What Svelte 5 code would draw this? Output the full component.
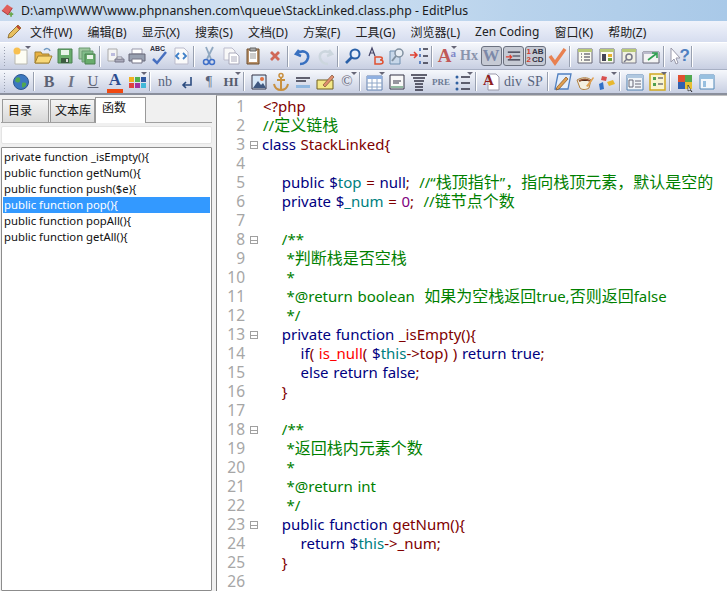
<script>
  const fnList = [
    'private function _isEmpty(){',
    'public function getNum(){',
    'public function push($e){',
    'public function pop(){',
    'public function popAll(){',
    'public function getAll(){'
  ];
  const menus = ['文件(W)','编辑(B)','显示(X)','搜索(S)','文档(D)','方案(F)','工具(G)','浏览器(L)','Zen Coding','窗口(K)','帮助(Z)'];
  const k='k', i='i', o='o', c='c', t='t', n='n', r='r', v='v';
  const lines = [
    {s:[[i,'<?php']]},
    {s:[[c,'//定义链栈']]},
    {f:1,x:1,s:[[k,'class '],[i,'StackLinked{']]},
    {s:[]},
    {s:[[k,'    public '],[v,'$'],[t,'top'],[o,' = '],[k,'null'],[o,';  '],[c,'//“栈顶指针”，指向栈顶元素，默认是空的']]},
    {s:[[k,'    private '],[v,'$'],[t,'_num'],[o,' = '],[n,'0'],[o,';  '],[c,'//链节点个数']]},
    {s:[]},
    {f:1,s:[[c,'    /**']]},
    {s:[[c,'     *判断栈是否空栈']]},
    {s:[[c,'     *']]},
    {s:[[c,'     *@return boolean  如果为空栈返回true,否则返回false']]},
    {s:[[c,'     */']]},
    {f:1,s:[[k,'    private function '],[i,'_isEmpty(){']]},
    {s:[[k,'        if'],[i,'( '],[r,'is_null'],[i,'( '],[v,'$'],[t,'this'],[i,'->top) ) '],[k,'return true'],[i,';']]},
    {s:[[k,'        else return false'],[i,';']]},
    {s:[[i,'    }']]},
    {s:[]},
    {f:1,s:[[c,'    /**']]},
    {s:[[c,'     *返回栈内元素个数']]},
    {s:[[c,'     *']]},
    {s:[[c,'     *@return int']]},
    {s:[[c,'     */']]},
    {f:1,s:[[k,'    public function '],[i,'getNum(){']]},
    {s:[[k,'        return '],[v,'$'],[t,'this'],[i,'->_num;']]},
    {s:[[i,'    }']]},
    {s:[]}
  ];
  const parts = (text) => text.split(/([\u3000-\u9fff\uff00-\uffef]+)/).filter(Boolean);
  const isCjk = (p) => /[\u3000-\u9fff\uff00-\uffef]/.test(p);
</script>

<div class="win">
  <div class="title">
    <svg class="appicon" viewBox="0 0 16 16"><path d="M1 8 7 1l6 4-5 8z" fill="#e0605c"/><path d="M1 8l7 5 5-8" fill="none" stroke="#a83030"/><path d="M9 12h5M11.500 10v5" stroke="#6aa84f" stroke-width="2"/></svg>
    <span>D:\amp\WWW\www.phpnanshen.com\queue\StackLinked.class.php - EditPlus</span>
  </div>

  <div class="menu">
    <svg class="pencil" viewBox="0 0 16 16"><path d="M2 14 3 10 12 1l3 3-9 9z" fill="#e8c060" stroke="#806020" stroke-width=".8"/><path d="M11 2l3 3" stroke="#c04030" stroke-width="2"/></svg>
    {#each menus as m}<span>{m}</span>{/each}
  </div>

  <div class="bar one">
    <i class="grip"></i>
    <b class="btn dd"><svg viewBox="0 0 22 22"><path d="M5 5h12v14H5z" fill="#fdfdf4" stroke="#b8b8b0"/><circle cx="7" cy="6" r="3.500" fill="#f8c050"/></svg></b>
    <b class="btn"><svg viewBox="0 0 22 22"><path d="M3 7h6l1 2h7v9H3z" fill="#e8b040" stroke="#a08030"/><path d="M3 18l3-7h14l-3 7z" fill="#f8d878" stroke="#a08030"/><path d="M12 5c2-2 5-2 6 1" fill="none" stroke="#7098c0" stroke-width="1.500"/></svg></b>
    <b class="btn"><svg viewBox="0 0 22 22"><path d="M4 4h14v14H4z" fill="#68ac6c" stroke="#4a8050"/><path d="M7 5h8v5H7z" fill="#e8f4e8"/><path d="M7 13h8v5H7z" fill="#3c5c40"/><path d="M12 14h2v3h-2z" fill="#ddd"/></svg></b>
    <b class="btn"><svg viewBox="0 0 22 22"><path d="M3 3h11v11H3z" fill="#a0c8a0" stroke="#6a9a70"/><path d="M6 6h11v11H6z" fill="#80bc88" stroke="#6a9a70"/><path d="M9 9h10v10H9z" fill="#68ac6c" stroke="#4a8050"/><path d="M11 10h6v4h-6z" fill="#e8f4e8"/></svg></b>
    <i class="sep"></i>
    <b class="btn"><svg viewBox="0 0 22 22"><path d="M4 4h9v12H4z" fill="#f4f4f4" stroke="#aaa"/><path d="M7 8h4v3H7z" fill="#bbd"/><path d="M11 14h9v3h-9z" fill="#aab" stroke="#778"/><path d="M13 12h5v2h-5z" fill="#fff" stroke="#889"/></svg></b>
    <b class="btn"><svg viewBox="0 0 22 22"><path d="M6 4h10v5H6z" fill="#fff" stroke="#99a"/><path d="M3 9h16v7H3z" fill="#98a0b0" stroke="#667"/><path d="M6 14h10v4H6z" fill="#fff" stroke="#778"/></svg></b>
    <b class="btn"><svg viewBox="0 0 22 22"><path d="M5 14l4 4 9-11" fill="none" stroke="#4870c0" stroke-width="2.500"/></svg><em class="abc">ABC</em></b>
    <b class="btn"><svg viewBox="0 0 22 22"><path d="M5 3h9l4 4v12H5z" fill="#fafafa" stroke="#bbc"/><path d="M9 8 6 11l3 3M13 8l3 3-3 3" fill="none" stroke="#4080c8" stroke-width="1.800"/></svg></b>
    <i class="sep"></i>
    <b class="btn"><svg viewBox="0 0 22 22"><path d="M8 2l5 12M15 2l-6 12" stroke="#90a8c0" stroke-width="1.800"/><circle cx="8" cy="17" r="2.500" fill="none" stroke="#4070c8" stroke-width="1.500"/><circle cx="14" cy="17" r="2.500" fill="none" stroke="#4070c8" stroke-width="1.500"/></svg></b>
    <b class="btn"><svg viewBox="0 0 22 22"><path d="M4 3h8l3 3v9H4z" fill="#f8f8f8" stroke="#bbc"/><path d="M9 8h7l3 3v8H9z" fill="#fff" stroke="#aab"/><path d="M11 12h6M11 14h6M11 16h6" stroke="#aab"/></svg></b>
    <b class="btn"><svg viewBox="0 0 22 22"><path d="M5 4h12v15H5z" fill="#b89068" stroke="#705030"/><path d="M7 6h8v11H7z" fill="#fff"/><path d="M8 3h6v3H8z" fill="#aaa" stroke="#666"/><path d="M8 9h6M8 11h6M8 13h6" stroke="#999"/></svg></b>
    <b class="btn"><svg viewBox="0 0 22 22"><path d="M7 7l8 8M15 7l-8 8" stroke="#d06858" stroke-width="2.800"/></svg></b>
    <i class="sep"></i>
    <b class="btn"><svg viewBox="0 0 22 22"><path d="M7 5 4 9l5 2M4 9c7-5 13-2 12 4-1 4-4 6-8 6" fill="none" stroke="#3870c0" stroke-width="2.600"/></svg></b>
    <b class="btn"><svg viewBox="0 0 22 22"><path d="M15 5l3 4-5 2M18 9c-7-5-13-2-12 4 1 4 4 6 8 6" fill="none" stroke="#ccd6de" stroke-width="2.600"/></svg></b>
    <i class="sep"></i>
    <b class="btn"><svg viewBox="0 0 22 22"><circle cx="13" cy="9" r="4.500" fill="#e8f0fa" stroke="#2860a8" stroke-width="2"/><path d="M10 12l-6 6" stroke="#2860a8" stroke-width="2.600"/></svg></b>
    <b class="btn"><svg viewBox="0 0 22 22"><path d="M5 11 8 3l3 8M6 8h4" fill="none" stroke="#446" stroke-width="1.200"/><path d="M11 12h5c3 0 3 3 0 3 4 0 4 4 0 4h-5z" fill="none" stroke="#e05030" stroke-width="1.500"/></svg></b>
    <b class="btn"><svg viewBox="0 0 22 22"><path d="M4 6h10v13H4z" fill="#c8d8ea" stroke="#7090b0"/><circle cx="13" cy="8" r="4" fill="#e8eef4" stroke="#8090a0" stroke-width="1.500"/><path d="M10 11l-4 5" stroke="#8090a0" stroke-width="2"/></svg></b>
    <b class="btn"><svg viewBox="0 0 22 22"><path d="M2 10h7M6 7l3 3-3 3" fill="none" stroke="#e04030" stroke-width="1.500"/><path d="M15 4h5M15 11h5M15 18h5" stroke="#334" stroke-width="1.400"/><path d="M12 3v3M12 9v3M12 16v3" stroke="#3060b0" stroke-width="1.400"/></svg></b>
    <i class="sep"></i>
    <b class="btn dd serif"><em class="big">A</em><em class="sup">a</em></b>
    <b class="btn serif"><em class="hx">Hx</em></b>
    <b class="btn on"><em class="w">W</em></b>
    <b class="btn on"><svg viewBox="0 0 20 18"><path d="M4 5h13M9 9h8M4 13h13" stroke="#334" stroke-width="1.300"/><path d="M2 10h6M6 8l2 2-2 2" fill="none" stroke="#e04030" stroke-width="1.300"/></svg></b>
    <b class="btn on num"><em class="n1">1<br>2</em><em class="n2">AB<br>CD</em></b>
    <b class="btn"><svg viewBox="0 0 22 22"><path d="M4 11l5 7L19 4" fill="none" stroke="#e88050" stroke-width="3.400"/></svg></b>
    <i class="sep"></i>
    <b class="btn"><svg viewBox="0 0 22 22"><path d="M4 4h14v14H4z" fill="#fafaf0" stroke="#667"/><path d="M4 4h14v3H4z" fill="#b8c878"/><path d="M7 9h1M7 12h1M7 15h1M10 9h6M10 12h6M10 15h6" stroke="#334"/></svg></b>
    <b class="btn"><svg viewBox="0 0 22 22"><path d="M4 4h14v14H4z" fill="#fafaf0" stroke="#667"/><path d="M4 4h14v3H4z" fill="#b8c878"/><path d="M6 9h4v7H6z" fill="#445"/><path d="M12 9h4v3h-4z" fill="#e8b030"/><path d="M12 13h4v3h-4z" fill="#70a040"/></svg></b>
    <b class="btn"><svg viewBox="0 0 22 22"><path d="M4 4h14v14H4z" fill="#f0f0e4" stroke="#778"/><path d="M4 4h14v3H4z" fill="#b8c878"/><circle cx="11" cy="12" r="3" fill="none" stroke="#778" stroke-width="1.500"/><path d="M9 14l-3 3" stroke="#778" stroke-width="1.500"/></svg></b>
    <b class="btn"><svg viewBox="0 0 22 22"><path d="M3 7h16v11H3z" fill="#f4f4f4" stroke="#667"/><path d="M3 7h16v2H3z" fill="#bbc"/><path d="M8 15l8-6M12 8h5v5" fill="none" stroke="#30a050" stroke-width="1.600"/></svg></b>
    <i class="sep"></i>
    <b class="btn"><svg viewBox="0 0 22 22"><path d="M3 3v14l3-3 2 5 2-1-2-5h4z" fill="#fff" stroke="#99a"/></svg><em class="help">?</em></b>
    <i class="sep"></i>
  </div>

  <div class="bar two">
    <i class="grip"></i>
    <b class="btn"><svg viewBox="0 0 22 22"><circle cx="11" cy="11" r="7.500" fill="#3c78c0" stroke="#2c5890"/><path d="M6 7c3-2 5 0 4 3s-4 1-5 0zM12 12c3-1 5 0 4 2s-3 3-4 2z" fill="#50a850"/></svg></b>
    <i class="sep"></i>
    <b class="btn txt bb">B</b>
    <b class="btn txt ii">I</b>
    <b class="btn txt uu">U</b>
    <b class="btn txt aa">A</b>
    <b class="btn dd"><svg viewBox="0 0 22 22"><path d="M3 6h5v5H3z" fill="#f0b020"/><path d="M9 6h5v5H9z" fill="#50b050"/><path d="M15 6h5v5h-5z" fill="#3058a0"/><path d="M3 12h5v5H3z" fill="#e04040"/><path d="M9 12h5v5H9z" fill="#a030a0"/><path d="M15 12h5v5h-5z" fill="#40b8d8"/></svg></b>
    <i class="sep"></i>
    <b class="btn txt sm">nb</b>
    <b class="btn"><svg viewBox="0 0 22 22"><path d="M15 6v8H7M10 11l-3 3 3 3" fill="none" stroke="#2c4c80" stroke-width="1.600"/></svg></b>
    <b class="btn txt sm">¶</b>
    <b class="btn dd txt sm hb">HI</b>
    <i class="sep"></i>
    <b class="btn"><svg viewBox="0 0 22 22"><path d="M4 4h14v14H4z" fill="#d8e8f8" stroke="#334"/><path d="M5 17l5-7 3 4 2-2 3 5z" fill="#405880"/><circle cx="14" cy="8" r="2" fill="#e07040"/></svg></b>
    <b class="btn"><svg viewBox="0 0 22 22"><circle cx="11" cy="4.500" r="2" fill="none" stroke="#c89040" stroke-width="1.500"/><path d="M11 6v13M7 9h8M4 13c1 5 4 6 7 6s6-1 7-6" fill="none" stroke="#c89040" stroke-width="2"/></svg></b>
    <b class="btn"><svg viewBox="0 0 22 22"><path d="M4 7h14M4 10h10" stroke="#334" stroke-width="1.400"/><path d="M4 14h14v3H4z" fill="#90b8e0"/></svg></b>
    <b class="btn"><svg viewBox="0 0 22 22"><path d="M3 9h16v9H3z" fill="#f4e888" stroke="#706020"/><path d="M9 14 18 4l2 2-9 10z" fill="#e09070" stroke="#805030" stroke-width=".7"/></svg></b>
    <b class="btn dd txt cc">©</b>
    <i class="sep"></i>
    <b class="btn dd"><svg viewBox="0 0 22 22"><path d="M3 5h15v14H3z" fill="#fff" stroke="#6080b0"/><path d="M3 5h15v3H3z" fill="#90b0e0"/><path d="M8 8v11M13 8v11M3 12h15M3 16h15" stroke="#90a8c8"/></svg></b>
    <b class="btn"><svg viewBox="0 0 22 22"><path d="M4 4h14v14H4z" fill="#f8f8f8" stroke="#334"/><path d="M7 10h8M7 12h6" stroke="#334"/><path d="M5 15h12v2H5z" fill="#90b8a0"/></svg></b>
    <b class="btn"><svg viewBox="0 0 22 22"><path d="M3 4h16M5 7h12M6 10h10M7 13h8M7 16h8M7 19h8" stroke="#334" stroke-width="1.300"/></svg></b>
    <b class="btn txt pre">PRE</b>
    <b class="btn dd"><svg viewBox="0 0 22 22"><circle cx="5" cy="6" r="1.500" fill="#3060a0"/><circle cx="5" cy="12" r="1.500" fill="#3060a0"/><circle cx="5" cy="18" r="1.500" fill="#3060a0"/><path d="M9 6h9M9 12h9M9 18h9" stroke="#334" stroke-width="1.300"/></svg></b>
    <i class="sep"></i>
    <b class="btn"><svg viewBox="0 0 22 22"><path d="M8 3h8l3 3v13H8z" fill="#fff" stroke="#99a"/></svg><em class="reda">A</em></b>
    <b class="btn txt sm">div</b>
    <b class="btn txt sm">SP</b>
    <i class="sep"></i>
    <b class="btn"><svg viewBox="0 0 22 22"><path d="M6 3h13l-3 15H3z" fill="#e4eefa" stroke="#5080c0" stroke-width="1.300"/><path d="M4 19l3-1 9-10-2-2-9 10z" fill="#e0a050" stroke="#805020" stroke-width=".7"/></svg></b>
    <b class="btn"><svg viewBox="0 0 22 22"><path d="M3 9c5-3 11-3 14 0l-2 8c-3 2-7 2-9 0z" fill="#f4f0e0" stroke="#b08040"/><path d="M5 10c4-2 8-2 11 0" stroke="#905030" stroke-width="2"/><path d="M12 15 19 6l1 1-6 9z" fill="#e0a050"/></svg></b>
    <b class="btn dd"><svg viewBox="0 0 22 22"><path d="M6 5l5 1-1 4-5-1z" fill="#d85050"/><path d="M3 13l4-2 1 7-4 1z" fill="#3070c8"/><path d="M11 11l6-2 2 4-6 2z" fill="#e8b830"/></svg></b>
    <i class="sep"></i>
    <b class="btn"><svg viewBox="0 0 22 22"><path d="M3 4h16v15H3z" fill="#f0f4f8" stroke="#5080b0"/><path d="M3 4h16v3H3z" fill="#b0c8e0"/><path d="M5 9h4v7H5z" fill="none" stroke="#667"/><path d="M11 10h6M11 13h6M11 16h6" stroke="#667"/></svg></b>
    <b class="btn dd"><svg viewBox="0 0 22 22"><path d="M4 3h15v16H4z" fill="#f8f4d0" stroke="#d0a820" stroke-width="1.500"/><path d="M7 6h3v3H7z" fill="#50a050"/><path d="M7 12h3v3H7z" fill="#50a050"/><path d="M12 7h5M12 13h5" stroke="#334"/></svg></b>
    <i class="sep"></i>
    <b class="btn"><svg viewBox="0 0 22 22"><path d="M4 4h7v7H4z" fill="#e05030"/><path d="M11 4h7v7h-7z" fill="#50a850"/><path d="M4 11h7v7H4z" fill="#3060b0"/><path d="M11 11h7v7h-7z" fill="#e8c030"/><path d="M14 14v6l2-1 2 2z" fill="#fff" stroke="#111" stroke-width=".6"/></svg></b>
    <b class="btn"><svg viewBox="0 0 22 22"><path d="M4 4h14v14H4z" fill="#f4f8fc" stroke="#5088b8"/><path d="M4 4h14v4H4z" fill="#98c0e0"/><path d="M7 10h3v6H7z" fill="#98c0e0"/></svg></b>
  </div>

  <div class="main">
    <aside class="left">
      <div class="tabs">
        <span class="tab">目录</span>
        <span class="tab">文本库</span>
        <span class="tab active">函数</span>
      </div>
      <div class="search"></div>
      <ul class="list">
        {#each fnList as f, idx}
          <li class:sel={idx === 3}>{f}</li>
        {/each}
      </ul>
    </aside>
    <section class="editor">
      {#each lines as l, idx}
        <div class="line">
          <span class="no">{idx + 1}</span>
          <span class="fold">{#if l.f}<i class="box"></i>{/if}</span>
          <span class="code" class:tight={l.x}>{#each l.s as s}<span class={s[0]}>{#each parts(s[1]) as p}{#if isCjk(p)}<span class="cjk">{p}</span>{:else}{p}{/if}{/each}</span>{/each}</span>
        </div>
      {/each}
    </section>
  </div>
</div>

<style>
  :global(body) { margin: 0; background: #f0f0f0; }
  .win { width: 727px; height: 591px; overflow: hidden; display: flex; flex-direction: column; font-family: "Noto Sans", "Noto Sans CJK SC", sans-serif; color: #111; }
  .title { height: 21px; display: flex; align-items: center; gap: 6px; padding-left: 1px; font-size: 12.300px; color: #1a1a1a; background: linear-gradient(90deg, #c6d9ee, #d2e2f2 40%, #b9d3ec 70%, #a9c9e8); flex: none; }
  .appicon { width: 14px; height: 15px; flex: none; }
  .menu { height: 21px; flex: none; display: flex; align-items: center; gap: 15.100px; padding-left: 6px; font-size: 12px; background: linear-gradient(#f0f3fb, #d6ddef); border-bottom: 1px solid #fff; color: #222; white-space: nowrap; }
  .pencil { width: 16px; height: 16px; margin-right: -7px; }
  .bar { flex: none; display: flex; align-items: center; padding-left: 3px; background: linear-gradient(#f6f8fc, #c8cfe2); }
  .one { height: 26px; border-bottom: 1px solid #a8b0c4; }
  .two { height: 23px; border-bottom: 2px solid #8a8f9c; }
  .grip { width: 3px; height: 20px; margin-right: 4px; flex: none; background: radial-gradient(circle, #9aa0b0 .8px, transparent 1px) 0 0 / 3px 3px; }
  .sep { width: 1px; height: 21px; background: #98a0b0; margin: 0 3px 0 1px; border-right: 1px solid #fff; flex: none; }
  .two .sep { height: 19px; }
  .btn { width: 22px; height: 22px; flex: none; position: relative; display: flex; align-items: center; justify-content: center; font-weight: 400; }
  .btn svg { width: 22px; height: 22px; display: block; }
  .btn em { font-style: normal; }
  .dd::after { content: ""; position: absolute; top: 1px; right: 1px; border: 3px solid transparent; border-top: 3px solid #667; border-bottom: 0; }
  .abc { position: absolute; top: 0; left: 2px; font: bold 7px "Liberation Sans", sans-serif; color: #334; }
  .serif { font-family: "Liberation Serif", serif; }
  .big { font: bold 19px "Liberation Serif", serif; color: #c05858; margin-right: 5px; }
  .sup { position: absolute; top: 2px; right: 2px; font: bold 11px "Liberation Serif", serif; color: #8088c8; }
  .hx { font: bold 14px "Liberation Serif", serif; color: #8a94ac; }
  .on { width: 21px; margin: -1px .5px 0; height: 20px; border: 1px solid #6c7280; border-radius: 3px; background: #c6cad4; box-sizing: border-box; }
  .on svg { width: 19px; height: 18px; flex: none; }
  .w { font: italic bold 17px "Liberation Serif", serif; color: #7c88a8; }
  .num { gap: 1px; font: bold 8px/8px "Liberation Sans", sans-serif; }
  .n1 { color: #d04030; }
  .n2 { color: #334; }
  .help { position: absolute; right: 0; top: 0; font: bold 17px/22px "Liberation Sans", sans-serif; color: #5080c0; }
  .txt { font-family: "Liberation Serif", serif; font-weight: bold; color: #5c6274; }
  .bb { font-size: 16px; }
  .ii { font-style: italic; font-size: 16px; color: #707484; }
  .uu { font-size: 15px; font-weight: 400; text-decoration: underline; }
  .aa { font-size: 17px; color: #2c4c90; border-bottom: 4px solid #f04810; height: 18px; width: 16px; margin: 0 3px; line-height: 16px; }
  .sm { font-size: 14px; color: #58647e; font-weight: 400; }
  .hb { font-size: 13px; color: #555c6c; font-weight: bold; }
  .cc { font-size: 15px; font-weight: 400; color: #667; }
  .pre { font-size: 9px; color: #6c7a96; }
  .reda { position: absolute; left: 3px; top: 1px; font: bold 15px "Liberation Serif", serif; color: #902020; }

  .main { flex: 1; display: flex; min-height: 0; }
  .left { width: 212px; flex: none; padding: 2px 0 0 1px; box-sizing: border-box; display: flex; flex-direction: column; background: #f0f0f0; }
  .tabs { height: 25px; display: flex; align-items: flex-end; padding-left: 1px; border-bottom: 1px solid #a0a0a0; gap: 1px; flex: none; }
  .tab { height: 23px; width: 47px; box-sizing: border-box; font-size: 12px; line-height: 22px; padding-left: 5px; border: 1px solid #999; border-bottom: 0; background: linear-gradient(#f4f4f4, #d8d8d8); }
  .tab:nth-child(2) { width: 45px; padding-left: 4px; }
  .tab.active { height: 26px; width: 51px; margin: 0 0 -1px -1px; padding-left: 6px; background: #fff; line-height: 20px; }
  .search { height: 18px; margin: 3px 0 3px 0; background: #fff; border: 1px solid #e4e4e4; box-sizing: border-box; border-radius: 2px; flex: none; }
  .list { flex: 1; margin: 0; padding: 1px 1px 0; list-style: none; background: #fff; border: 1px solid #8c8c8c; border-radius: 1px; font-size: 11.300px; }
  .list li { height: 16px; line-height: 16px; padding-left: 1px; color: #111; white-space: nowrap; }
  .list li.sel { background: #3399ff; color: #fff; }

  .editor { flex: 1; min-width: 0; overflow: hidden; background: #fff; margin-left: 4px; border-left: 1px solid #808080; border-top: 1px solid #c0c0c0; padding-top: 1px; font-family: "Noto Sans", "Noto Sans CJK SC", sans-serif; font-size: 15px; word-spacing: .8px; }
  .line { height: 19px; display: flex; align-items: center; white-space: pre; line-height: 19px; }
  .no { width: 28px; text-align: right; color: #a6a6a6; flex: none; font-size: 15.500px; }
  .fold { width: 18px; flex: none; display: flex; justify-content: center; }
  .box { width: 8px; height: 8px; border: 1px solid #a0a0a0; box-sizing: border-box; background: linear-gradient(#a0a0a0, #a0a0a0) center / 6px 1px no-repeat; margin-top: 1px; }
  .code { flex: none; }
  .tight { margin-left: -1px; }
  .cjk { font-size: 16px; font-family: "Noto Sans CJK SC", sans-serif; line-height: 1; }
  .k { color: #000080; }
  .i { color: #800000; }
  .o { color: #800000; }
  .c { color: #008000; }
  .t { color: #008080; }
  .v { color: #000080; }
  .n { color: #800080; }
  .r { color: #ff0000; }
</style>
